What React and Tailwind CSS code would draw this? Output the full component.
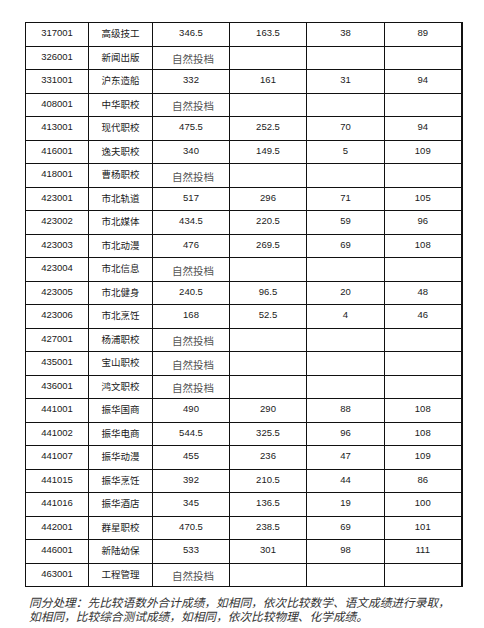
const rows = [
	["317001", "高级技工", "346.5", "163.5", "38", "89"],
	["326001", "新闻出版"],
	["331001", "沪东造船", "332", "161", "31", "94"],
	["408001", "中华职校"],
	["413001", "现代职校", "475.5", "252.5", "70", "94"],
	["416001", "逸夫职校", "340", "149.5", "5", "109"],
	["418001", "曹杨职校"],
	["423001", "市北轨道", "517", "296", "71", "105"],
	["423002", "市北媒体", "434.5", "220.5", "59", "96"],
	["423003", "市北动漫", "476", "269.5", "69", "108"],
	["423004", "市北信息"],
	["423005", "市北健身", "240.5", "96.5", "20", "48"],
	["423006", "市北烹饪", "168", "52.5", "4", "46"],
	["427001", "杨浦职校"],
	["435001", "宝山职校"],
	["436001", "鸿文职校"],
	["441001", "振华国商", "490", "290", "88", "108"],
	["441002", "振华电商", "544.5", "325.5", "96", "108"],
	["441007", "振华动漫", "455", "236", "47", "109"],
	["441015", "振华烹饪", "392", "210.5", "44", "86"],
	["441016", "振华酒店", "345", "136.5", "19", "100"],
	["442001", "群星职校", "470.5", "238.5", "69", "101"],
	["446001", "新陆幼保", "533", "301", "98", "111"],
	["463001", "工程管理"],
];

const widths = ["w-[63px]", "w-[64px]", "w-[77px]", "w-[77px]", "w-[78px]", "w-[77px]"];

function Cell({ children, w, cjk }) {
	return (
		<td
			className={`${w} h-[23.5px] border border-[#111] p-0 pb-[2px] text-center align-middle text-[9.5px] text-[#1a1a1a] ${
				cjk ? "font-['Noto_Sans_CJK_SC',sans-serif]" : "font-['Liberation_Sans',Arial,sans-serif]"
			}`}
		>
			{children}
		</td>
	);
}

export default function App() {
	return (
		<div className="w-[484px] h-[628px] bg-white pt-[22px] pl-[25px]">
			<table className="border-collapse table-fixed w-[437px] border-r-2 border-r-[#111]">
				<tbody>
					{rows.map((r) => (
						<tr key={r[0]}>
							<Cell w={widths[0]}>{r[0]}</Cell>
							<Cell w={widths[1]} cjk>
								{r[1]}
							</Cell>
							{r.length > 2 ? (
								<>
									<Cell w={widths[2]}>{r[2]}</Cell>
									<Cell w={widths[3]}>{r[3]}</Cell>
									<Cell w={widths[4]}>{r[4]}</Cell>
									<Cell w={widths[5]}>{r[5]}</Cell>
								</>
							) : (
								<>
									<td className="w-[77px] h-[23.5px] border border-[#111] p-0 pt-[3px] pl-[4px] text-center align-middle text-[10.5px] text-[#555] font-['Noto_Sans_CJK_SC',serif]">
										自然投档
									</td>
									<td className="border border-[#111] p-0" />
									<td className="border border-[#111] p-0" />
									<td className="border border-[#111] p-0" />
								</>
							)}
						</tr>
					))}
				</tbody>
			</table>
			<p className="mt-[8px] ml-[4px] text-[11.7px] leading-[14px] italic text-[#333] font-['Noto_Sans_CJK_SC',serif] whitespace-nowrap">
				同分处理：先比较语数外合计成绩，如相同，依次比较数学、语文成绩进行录取，
				<br />
				如相同，比较综合测试成绩，如相同，依次比较物理、化学成绩。
			</p>
		</div>
	);
}
